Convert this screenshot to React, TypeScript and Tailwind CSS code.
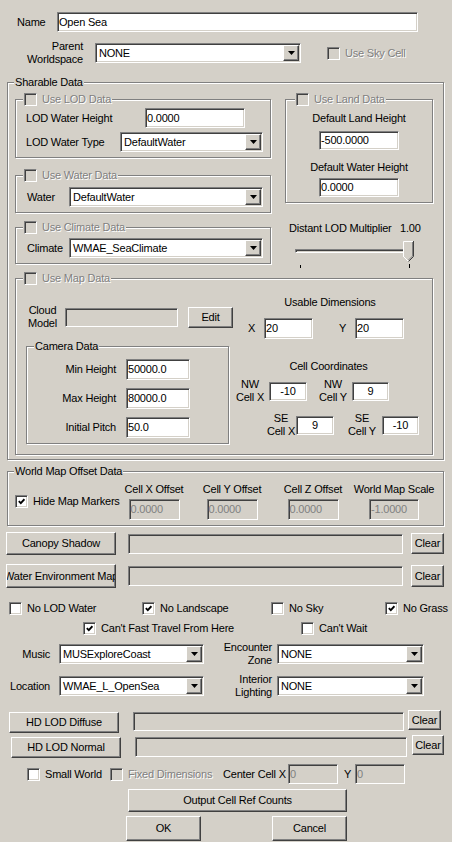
import React from "react";

const sunken =
  "border border-t-[#808080] border-l-[#808080] border-b-white border-r-white shadow-[inset_1px_1px_0_#404040,inset_-1px_-1px_0_#d4d0c8]";
const raised =
  "border border-t-white border-l-white border-b-[#404040] border-r-[#404040] shadow-[inset_-1px_-1px_0_#808080]";
const etched = "border border-[#808080] shadow-[1px_1px_0_#fff,inset_1px_1px_0_#fff]";
const grayText = "text-[#808080] [text-shadow:1px_1px_0_#fff]";

type BoxProps = { className?: string; value?: string; disabled?: boolean; center?: boolean };

const Edit = ({ className = "", value = "", disabled, center }: BoxProps) => (
  <div
    className={`${sunken} ${disabled ? "bg-[#d4d0c8] text-[#808080]" : "bg-white"} flex shrink-0 items-center overflow-hidden whitespace-nowrap px-[1px] ${center ? "justify-center" : ""} ${className}`}
  >
    {value}
  </div>
);

const Arrow = () => (
  <div className={`${raised} bg-[#d4d0c8] m-[1px] flex w-[16px] shrink-0 items-center justify-center`}>
    <svg width="7" height="4" viewBox="0 0 7 4">
      <polygon points="0,0 7,0 3.5,4" fill="#000" />
    </svg>
  </div>
);

const Combo = ({ className = "", value = "" }: BoxProps) => (
  <div className={`${sunken} bg-white flex shrink-0 items-stretch ${className}`}>
    <div className="flex flex-1 items-center overflow-hidden whitespace-nowrap pl-[3px]">{value}</div>
    <Arrow />
  </div>
);

const Btn = ({ className = "", children }: { className?: string; children: React.ReactNode }) => (
  <div
    className={`${raised} bg-[#d4d0c8] flex shrink-0 items-center justify-center overflow-hidden whitespace-nowrap ${className}`}
  >
    {children}
  </div>
);

const Check = ({ checked, disabled }: { checked?: boolean; disabled?: boolean }) => (
  <span
    className={`${sunken} ${disabled ? "bg-[#d4d0c8]" : "bg-white"} flex h-[13px] w-[13px] shrink-0 items-center justify-center`}
  >
    {checked && (
      <svg width="7" height="7" viewBox="0 0 7 7">
        <polyline points="0.8,3.2 2.8,5.2 6.4,1.2" fill="none" stroke="#000" strokeWidth="1.8" />
      </svg>
    )}
  </span>
);

const CheckLabel = ({
  label,
  checked,
  disabled,
  className = "",
}: {
  label: string;
  checked?: boolean;
  disabled?: boolean;
  className?: string;
}) => (
  <div className={`flex shrink-0 items-center ${className}`}>
    <Check checked={checked} disabled={disabled} />
    <span className={`ml-[5px] whitespace-nowrap ${disabled ? grayText : ""}`}>{label}</span>
  </div>
);

const CheckLegend = ({ label, className }: { label: string; className: string }) => (
  <legend className={`bg-[#d4d0c8] px-[1px] ${className}`}>
    <span className="flex h-[13px] items-center">
      <Check disabled />
      <span className={`ml-[5px] ${grayText}`}>{label}</span>
    </span>
  </legend>
);

// two-line label, each line centred
const Two = ({ a, b, className = "" }: { a: string; b: string; className?: string }) => (
  <span className={`flex shrink-0 flex-col items-center whitespace-nowrap ${className}`}>
    <span>{a}</span>
    <span>{b}</span>
  </span>
);

export default function App() {
  return (
    <div className="h-[842px] w-[452px] overflow-hidden bg-[#d4d0c8] pt-[12px] font-['Liberation_Sans',Arial,sans-serif] text-[11px] leading-[13px] tracking-[-0.2px] text-black">
      {/* name */}
      <div className="flex h-[20px] items-center">
        <span className="ml-[17px] w-[40px]">Name</span>
        <Edit className="h-[20px] w-[361px]" value="Open Sea" />
      </div>

      {/* parent worldspace */}
      <div className="mt-[8px] flex h-[26px] items-center">
        <span className="ml-[13px] w-[70px] text-right">
          Parent
          <br />
          Worldspace
        </span>
        <Combo className="ml-[12px] h-[20px] w-[206px]" value="NONE" />
        <CheckLabel className="ml-[26px]" label="Use Sky Cell" disabled />
      </div>

      {/* sharable data */}
      <fieldset className={`${etched} ml-[7px] mt-[10px] w-[437px] pb-[4px]`}>
        <legend className="ml-[6px] bg-[#d4d0c8] px-[1px]">Sharable Data</legend>

        <div className="mt-[4px] flex">
          <div className="ml-[7px] flex w-[256px] flex-col">
            <fieldset className={`${etched} pb-[5px]`}>
              <CheckLegend className="ml-[7px]" label="Use LOD Data" />
              <div className="mt-[2px] flex items-center">
                <span className="ml-[10px] w-[119px]">LOD Water Height</span>
                <Edit className="h-[20px] w-[100px]" value="0.0000" />
              </div>
              <div className="mt-[4px] flex items-center">
                <span className="ml-[10px] w-[94px]">LOD Water Type</span>
                <Combo className="h-[20px] w-[143px]" value="DefaultWater" />
              </div>
            </fieldset>

            <fieldset className={`${etched} mt-[11px] pb-[5px]`}>
              <CheckLegend className="ml-[7px]" label="Use Water Data" />
              <div className="mt-[5px] flex items-center">
                <span className="ml-[11px] w-[42px]">Water</span>
                <Combo className="h-[20px] w-[194px]" value="DefaultWater" />
              </div>
            </fieldset>

            <fieldset className={`${etched} mt-[8px] pb-[5px]`}>
              <CheckLegend className="ml-[7px]" label="Use Climate Data" />
              <div className="mt-[4px] flex items-center">
                <span className="ml-[11px] w-[42px]">Climate</span>
                <Combo className="h-[20px] w-[194px]" value="WMAE_SeaClimate" />
              </div>
            </fieldset>
          </div>

          <div className="ml-[14px] flex w-[148px] flex-col">
            <fieldset className={`${etched} flex flex-col items-center pb-[5px]`}>
              <CheckLegend className="ml-[9px]" label="Use Land Data" />
              <span className="mt-[6px]">Default Land Height</span>
              <Edit className="mt-[6px] h-[19px] w-[80px]" value="-500.0000" />
              <span className="mt-[11px]">Default Water Height</span>
              <Edit className="mt-[4px] h-[19px] w-[80px]" value="0.0000" />
            </fieldset>

            <div className="mt-[19px] flex">
              <span className="ml-[4px] w-[111px]">Distant LOD Multiplier</span>
              <span>1.00</span>
            </div>
            <div className="relative h-[33px]">
              <div className={`${sunken} ml-[10px] mt-[14px] h-[4px] w-[118px]`} />
              <svg className="absolute left-[118px] top-[6px]" width="11" height="21" viewBox="0 0 11 21">
                <polygon points="0.5,0.5 10.5,0.5 10.5,15.5 5.5,20.5 0.5,15.5" fill="#d4d0c8" />
                <polyline points="0.5,16 0.5,0.5 10,0.5" fill="none" stroke="#fff" />
                <polyline points="0.5,15.5 5.5,20.5" fill="none" stroke="#fff" />
                <polyline points="10.5,0 10.5,15.5 5.5,20.5" fill="none" stroke="#404040" />
                <polyline points="9.5,1 9.5,15 5.5,19" fill="none" stroke="#808080" />
              </svg>
              <div className="absolute left-[15px] top-[30px] h-[3px] w-[1px] bg-black" />
              <div className="absolute left-[124px] top-[29px] h-[4px] w-[1px] bg-black" />
            </div>
          </div>
        </div>

        {/* map data */}
        <fieldset className={`${etched} ml-[7px] mt-[4px] w-[418px] pb-[10px]`}>
          <CheckLegend className="ml-[7px]" label="Use Map Data" />
          <div className="flex">
            <div className="ml-[10px] flex w-[207px] flex-col">
              <div className="mt-[19px] flex h-[26px] items-center">
                <Two className="ml-[2px] w-[29px]" a="Cloud" b="Model" />
                <Edit className="ml-[8px] h-[19px] w-[113px]" disabled />
                <Btn className="ml-[10px] h-[21px] w-[45px]">Edit</Btn>
              </div>

              <fieldset className={`${etched} mt-[10px] w-[203px] pb-[5px]`}>
                <legend className="ml-[7px] bg-[#d4d0c8] px-[1px]">Camera Data</legend>
                <div className="mt-[6px] flex items-center">
                  <span className="w-[89px] text-right">Min Height</span>
                  <Edit className="ml-[10px] h-[21px] w-[64px]" value="50000.0" />
                </div>
                <div className="mt-[8px] flex items-center">
                  <span className="w-[89px] text-right">Max Height</span>
                  <Edit className="ml-[10px] h-[21px] w-[64px]" value="80000.0" />
                </div>
                <div className="mt-[8px] flex items-center">
                  <span className="w-[89px] text-right">Initial Pitch</span>
                  <Edit className="ml-[10px] h-[21px] w-[64px]" value="50.0" />
                </div>
              </fieldset>
            </div>

            <div className="ml-[3px] flex w-[182px] flex-col">
              <span className="mt-[11px] pl-[6px] text-center">Usable Dimensions</span>
              <div className="mt-[9px] flex items-center">
                <span className="ml-[12px] w-[16px]">X</span>
                <Edit className="h-[21px] w-[49px]" value="20" />
                <span className="ml-[26px] w-[16px]">Y</span>
                <Edit className="h-[21px] w-[49px]" value="20" />
              </div>

              <span className="mt-[21px] pl-[3px] text-center">Cell Coordinates</span>
              <div className="mt-[5px] flex h-[26px] items-center">
                <Two className="w-[28px]" a="NW" b="Cell X" />
                <Edit className="ml-[5px] h-[19px] w-[38px]" value="-10" center />
                <Two className="ml-[12px] w-[28px]" a="NW" b="Cell Y" />
                <Edit className="ml-[5px] h-[19px] w-[37px]" value="9" center />
              </div>
              <div className="mt-[8px] flex h-[26px] items-center">
                <Two className="ml-[31px] w-[28px]" a="SE" b="Cell X" />
                <Edit className="ml-[1px] h-[19px] w-[38px]" value="9" center />
                <Two className="ml-[14px] w-[28px]" a="SE" b="Cell Y" />
                <Edit className="ml-[6px] h-[19px] w-[37px]" value="-10" center />
              </div>
            </div>
          </div>
        </fieldset>
      </fieldset>

      {/* world map offset */}
      <fieldset className={`${etched} ml-[7px] mt-[5px] w-[437px] pb-[5px]`}>
        <legend className="ml-[6px] bg-[#d4d0c8] px-[1px]">World Map Offset Data</legend>
        <div className="flex items-start">
          <div className="ml-[7px] mt-[17px] flex w-[109px] items-center">
            <Check checked />
            <span className="ml-[5px] whitespace-nowrap">Hide Map Markers</span>
          </div>
          <div className="flex w-[60px] flex-col items-center">
            <span className="mt-[5px] whitespace-nowrap">Cell X Offset</span>
            <Edit className="mt-[3px] h-[21px] w-[51px]" value="0.0000" disabled />
          </div>
          <div className="ml-[18px] flex w-[60px] flex-col items-center">
            <span className="mt-[5px] whitespace-nowrap">Cell Y Offset</span>
            <Edit className="mt-[3px] h-[21px] w-[51px]" value="0.0000" disabled />
          </div>
          <div className="ml-[21px] flex w-[60px] flex-col items-center">
            <span className="mt-[5px] whitespace-nowrap">Cell Z Offset</span>
            <Edit className="mt-[3px] h-[21px] w-[51px]" value="0.0000" disabled />
          </div>
          <div className="ml-[9px] flex w-[84px] flex-col items-center">
            <span className="mt-[5px] whitespace-nowrap">World Map Scale</span>
            <Edit className="mt-[3px] h-[21px] w-[50px]" value="-1.0000" disabled />
          </div>
        </div>
      </fieldset>

      {/* texture rows */}
      <div className="mt-[6px] flex h-[23px] items-center">
        <Btn className="ml-[6px] h-[23px] w-[110px]">Canopy Shadow</Btn>
        <Edit className="ml-[12px] h-[20px] w-[275px]" disabled />
        <Btn className="ml-[8px] h-[21px] w-[33px]">Clear</Btn>
      </div>
      <div className="mt-[9px] flex h-[24px] items-center">
        <Btn className="ml-[6px] h-[24px] w-[110px]">Water Environment Map</Btn>
        <Edit className="ml-[12px] h-[20px] w-[275px]" disabled />
        <Btn className="ml-[8px] h-[22px] w-[33px]">Clear</Btn>
      </div>

      {/* flags */}
      <div className="mt-[14px] flex h-[13px] items-center">
        <CheckLabel className="ml-[9px] w-[133px]" label="No LOD Water" />
        <CheckLabel className="w-[129px]" label="No Landscape" checked />
        <CheckLabel className="w-[114px]" label="No Sky" />
        <CheckLabel label="No Grass" checked />
      </div>
      <div className="mt-[7px] flex h-[13px] items-center">
        <CheckLabel className="ml-[83px] w-[218px]" label="Can't Fast Travel From Here" checked />
        <CheckLabel label="Can't Wait" />
      </div>

      {/* music / location */}
      <div className="mt-[6px] flex h-[26px] items-center">
        <span className="w-[50px] text-right">Music</span>
        <Combo className="ml-[9px] h-[20px] w-[145px]" value="MUSExploreCoast" />
        <span className="w-[68px] text-right">
          Encounter
          <br />
          Zone
        </span>
        <Combo className="ml-[5px] h-[20px] w-[147px]" value="NONE" />
      </div>
      <div className="mt-[6px] flex h-[26px] items-center">
        <span className="w-[50px] text-right">Location</span>
        <Combo className="ml-[9px] h-[20px] w-[145px]" value="WMAE_L_OpenSea" />
        <span className="w-[68px] text-right">
          Interior
          <br />
          Lighting
        </span>
        <Combo className="ml-[5px] h-[20px] w-[147px]" value="NONE" />
      </div>

      {/* hd lod */}
      <div className="mt-[11px] flex items-start">
        <Btn className="ml-[9px] mt-[2px] h-[21px] w-[110px]">HD LOD Diffuse</Btn>
        <Edit className="ml-[14px] mt-[2px] h-[19px] w-[271px]" disabled />
        <Btn className="ml-[4px] h-[20px] w-[33px]">Clear</Btn>
      </div>
      <div className="mt-[2px] flex items-start">
        <Btn className="ml-[11px] mt-[2px] h-[21px] w-[110px]">HD LOD Normal</Btn>
        <Edit className="ml-[14px] mt-[2px] h-[20px] w-[272px]" disabled />
        <Btn className="ml-[5px] h-[20px] w-[32px]">Clear</Btn>
      </div>

      {/* small world */}
      <div className="mt-[6px] flex h-[20px] items-center">
        <CheckLabel className="ml-[27px] w-[83px]" label="Small World" />
        <CheckLabel className="w-[113px]" label="Fixed Dimensions" disabled />
        <span className="w-[65px] whitespace-nowrap">Center Cell X</span>
        <Edit className="h-[20px] w-[50px]" value="0" disabled />
        <span className="ml-[6px] w-[11px]">Y</span>
        <Edit className="h-[20px] w-[50px]" value="0" disabled />
      </div>

      <Btn className="ml-[128px] mt-[5px] h-[23px] w-[219px]">Output Cell Ref Counts</Btn>

      <div className="mt-[4px] flex">
        <Btn className="ml-[126px] h-[25px] w-[75px]">OK</Btn>
        <Btn className="ml-[71px] h-[25px] w-[75px]">Cancel</Btn>
      </div>
    </div>
  );
}
